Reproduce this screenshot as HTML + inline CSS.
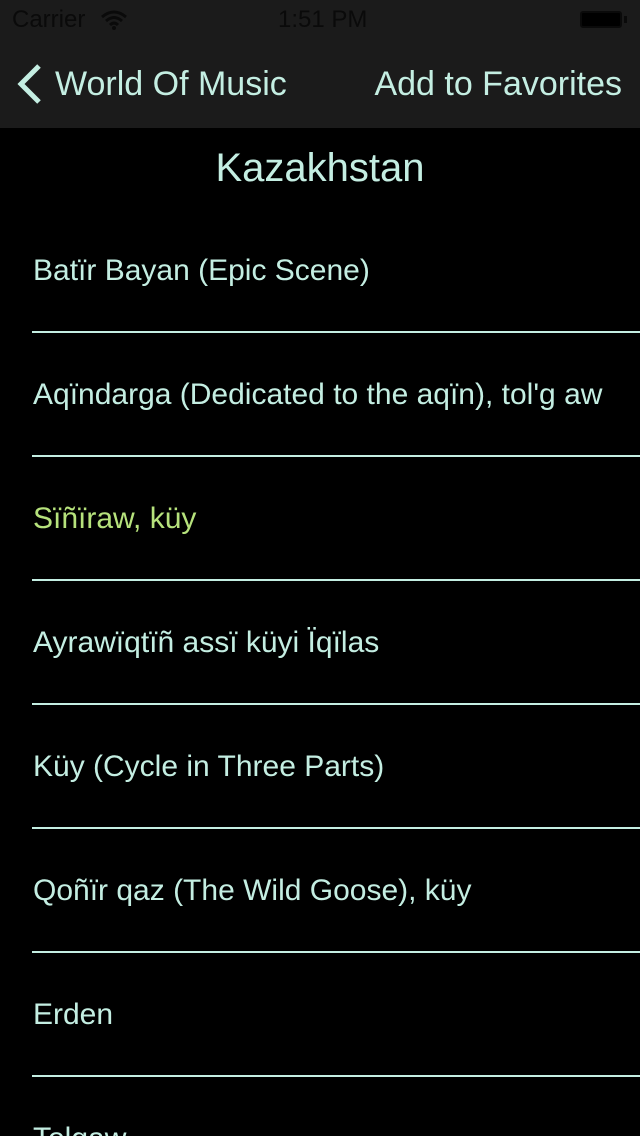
<html style="width:640px;height:1136px;overflow:hidden"><head><style>
body{margin:0;width:640px;height:1136px;background:#000;overflow:hidden;font-family:"Liberation Sans",sans-serif;position:relative}
.bar{position:absolute;left:0;top:0;width:640px;height:128px;background:#1b1b1b}
.st{position:absolute;top:6px;font-size:24px;color:#0a0a0a}
.nav{position:absolute;top:64px;font-size:34px;color:#c4eee2;line-height:40px;white-space:nowrap}
.title{position:absolute;top:146px;width:640px;text-align:center;font-size:40px;color:#c4eee2}
.row{position:absolute;left:32px;right:0;height:124px;border-bottom:2px solid #c4eee2;box-sizing:border-box}
.row span{position:absolute;left:1px;top:45px;font-size:30px;color:#c4eee2;line-height:34px;white-space:nowrap}
</style></head><body>
<div class="bar"></div>
<div class="st" style="left:12px">Carrier</div>
<svg style="position:absolute;left:100px;top:10px" width="28" height="20" viewBox="0 0 28 20"><path d="M2 7 Q14 -3 26 7 M6 11 Q14 4 22 11 M10 15 Q14 11 18 15" stroke="#0a0a0a" stroke-width="3" fill="none"/><circle cx="14" cy="18" r="2" fill="#0a0a0a"/></svg>
<div class="st" style="left:278px">1:51 PM</div>
<div style="position:absolute;left:580px;top:11px;width:42px;height:17px;border:2px solid #0a0a0a;border-radius:3px;background:#000;box-sizing:border-box"></div>
<div style="position:absolute;left:624px;top:16px;width:3px;height:7px;background:#0a0a0a"></div>
<svg style="position:absolute;left:14px;top:62px" width="30" height="44" viewBox="0 0 30 44"><path d="M25 4 L7 22 L25 40" stroke="#c4eee2" stroke-width="5" fill="none"/></svg>
<div class="nav" style="left:55px">World Of Music</div>
<div class="nav" style="right:18px">Add to Favorites</div>
<div class="title">Kazakhstan</div>
<div class="row" style="top:209px"><span>Batïr Bayan (Epic Scene)</span></div>
<div class="row" style="top:333px"><span>Aqïndarga (Dedicated to the aqïn), tol'g aw</span></div>
<div class="row" style="top:457px"><span style="color:#b6e27c">Sïñïraw, küy</span></div>
<div class="row" style="top:581px"><span>Ayrawïqtïñ assï küyi Ïqïlas</span></div>
<div class="row" style="top:705px"><span>Küy (Cycle in Three Parts)</span></div>
<div class="row" style="top:829px"><span>Qoñïr qaz (The Wild Goose), küy</span></div>
<div class="row" style="top:953px"><span>Erden</span></div>
<div class="row" style="top:1077px;height:59px;border:0;overflow:hidden"><span>Tolgaw</span></div>
</body></html>
